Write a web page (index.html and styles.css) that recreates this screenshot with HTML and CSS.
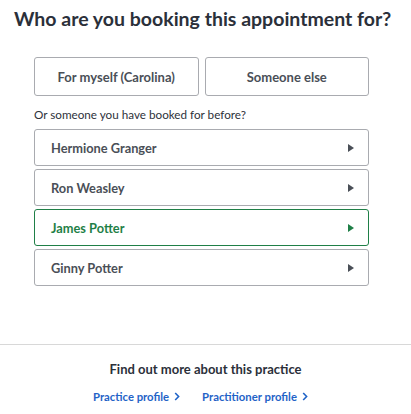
FILE: index.html
```html
<!DOCTYPE html>
<html>
<head>
<meta charset="utf-8">
<link rel="stylesheet" href="styles.css">
</head>
<body>
<div class="page">
  <h1 class="title">Who are you booking this appointment for?</h1>
  <div class="content">
    <div class="choices">
      <button class="choice">For myself (Carolina)</button>
      <button class="choice">Someone else</button>
    </div>
    <p class="hint">Or someone you have booked for before?</p>
    <ul class="people">
      <li class="person"><span>Hermione Granger</span><span class="tri"></span></li>
      <li class="person"><span>Ron Weasley</span><span class="tri"></span></li>
      <li class="person active"><span>James Potter</span><span class="tri"></span></li>
      <li class="person"><span>Ginny Potter</span><span class="tri"></span></li>
    </ul>
  </div>
  <footer class="footer">
    <div class="footer-title">Find out more about this practice</div>
    <div class="links">
      <a class="link" href="#">Practice profile <svg class="chev" width="6" height="9" viewBox="0 0 6 9"><path d="M1.2 1 L4.6 4.5 L1.2 8" fill="none" stroke="currentColor" stroke-width="1.6"/></svg></a>
      <a class="link" href="#">Practitioner profile <svg class="chev" width="6" height="9" viewBox="0 0 6 9"><path d="M1.2 1 L4.6 4.5 L1.2 8" fill="none" stroke="currentColor" stroke-width="1.6"/></svg></a>
    </div>
  </footer>
</div>
</body>
</html>
```
FILE: styles.css
```css
* { box-sizing: border-box; }
html, body { margin: 0; padding: 0; background: #fff; }
body { font-family: Lato, "Noto Sans", sans-serif; color: #2d323b; width: 411px; height: 414px; overflow: hidden; }
.page { display: flex; flex-direction: column; }
.title { margin: 0; padding: 6px 0 0 14px; font-size: 19.5px; font-weight: 700; line-height: 26px; color: #2b303a; white-space: nowrap; }
.content { padding: 25px 42px 0 34px; }
.choices { display: flex; gap: 6px; }
.choice { flex: 1; height: 39px; background: #fff; border: 1px solid #a9abb0; border-radius: 3px; font-family: inherit; font-size: 13px; font-weight: 700; color: #4a4f57; padding: 0; }
.hint { margin: 10px 0 7px; font-size: 11.7px; line-height: 16px; color: #2d323b; }
.people { list-style: none; margin: 0; padding: 0; display: flex; flex-direction: column; gap: 3px; }
.person { height: 37px; border: 1px solid #a9abb0; border-radius: 3px; display: flex; align-items: center; justify-content: space-between; padding: 0 14px 0 16px; font-size: 12.8px; font-weight: 700; color: #4a4f57; }
.tri { width: 0; height: 0; border-top: 4px solid transparent; border-bottom: 4px solid transparent; border-left: 6px solid #4a4f57; }
.person.active { border-color: #1f7f47; color: #1f7f47; }
.person.active .tri { border-left-color: #1f7f47; }
.footer { margin-top: 58px; border-top: 1px solid #d8d8d8; padding-top: 15px; text-align: center; }
.footer-title { font-size: 13px; font-weight: 700; line-height: 18px; color: #2b303a; }
.links { margin-top: 12px; display: flex; justify-content: center; gap: 22px; padding-right: 10px; }
.link { font-size: 11.3px; font-weight: 700; color: #1f63c7; text-decoration: none; display: inline-flex; align-items: center; gap: 5px; }
.chev { display: block; }
```
